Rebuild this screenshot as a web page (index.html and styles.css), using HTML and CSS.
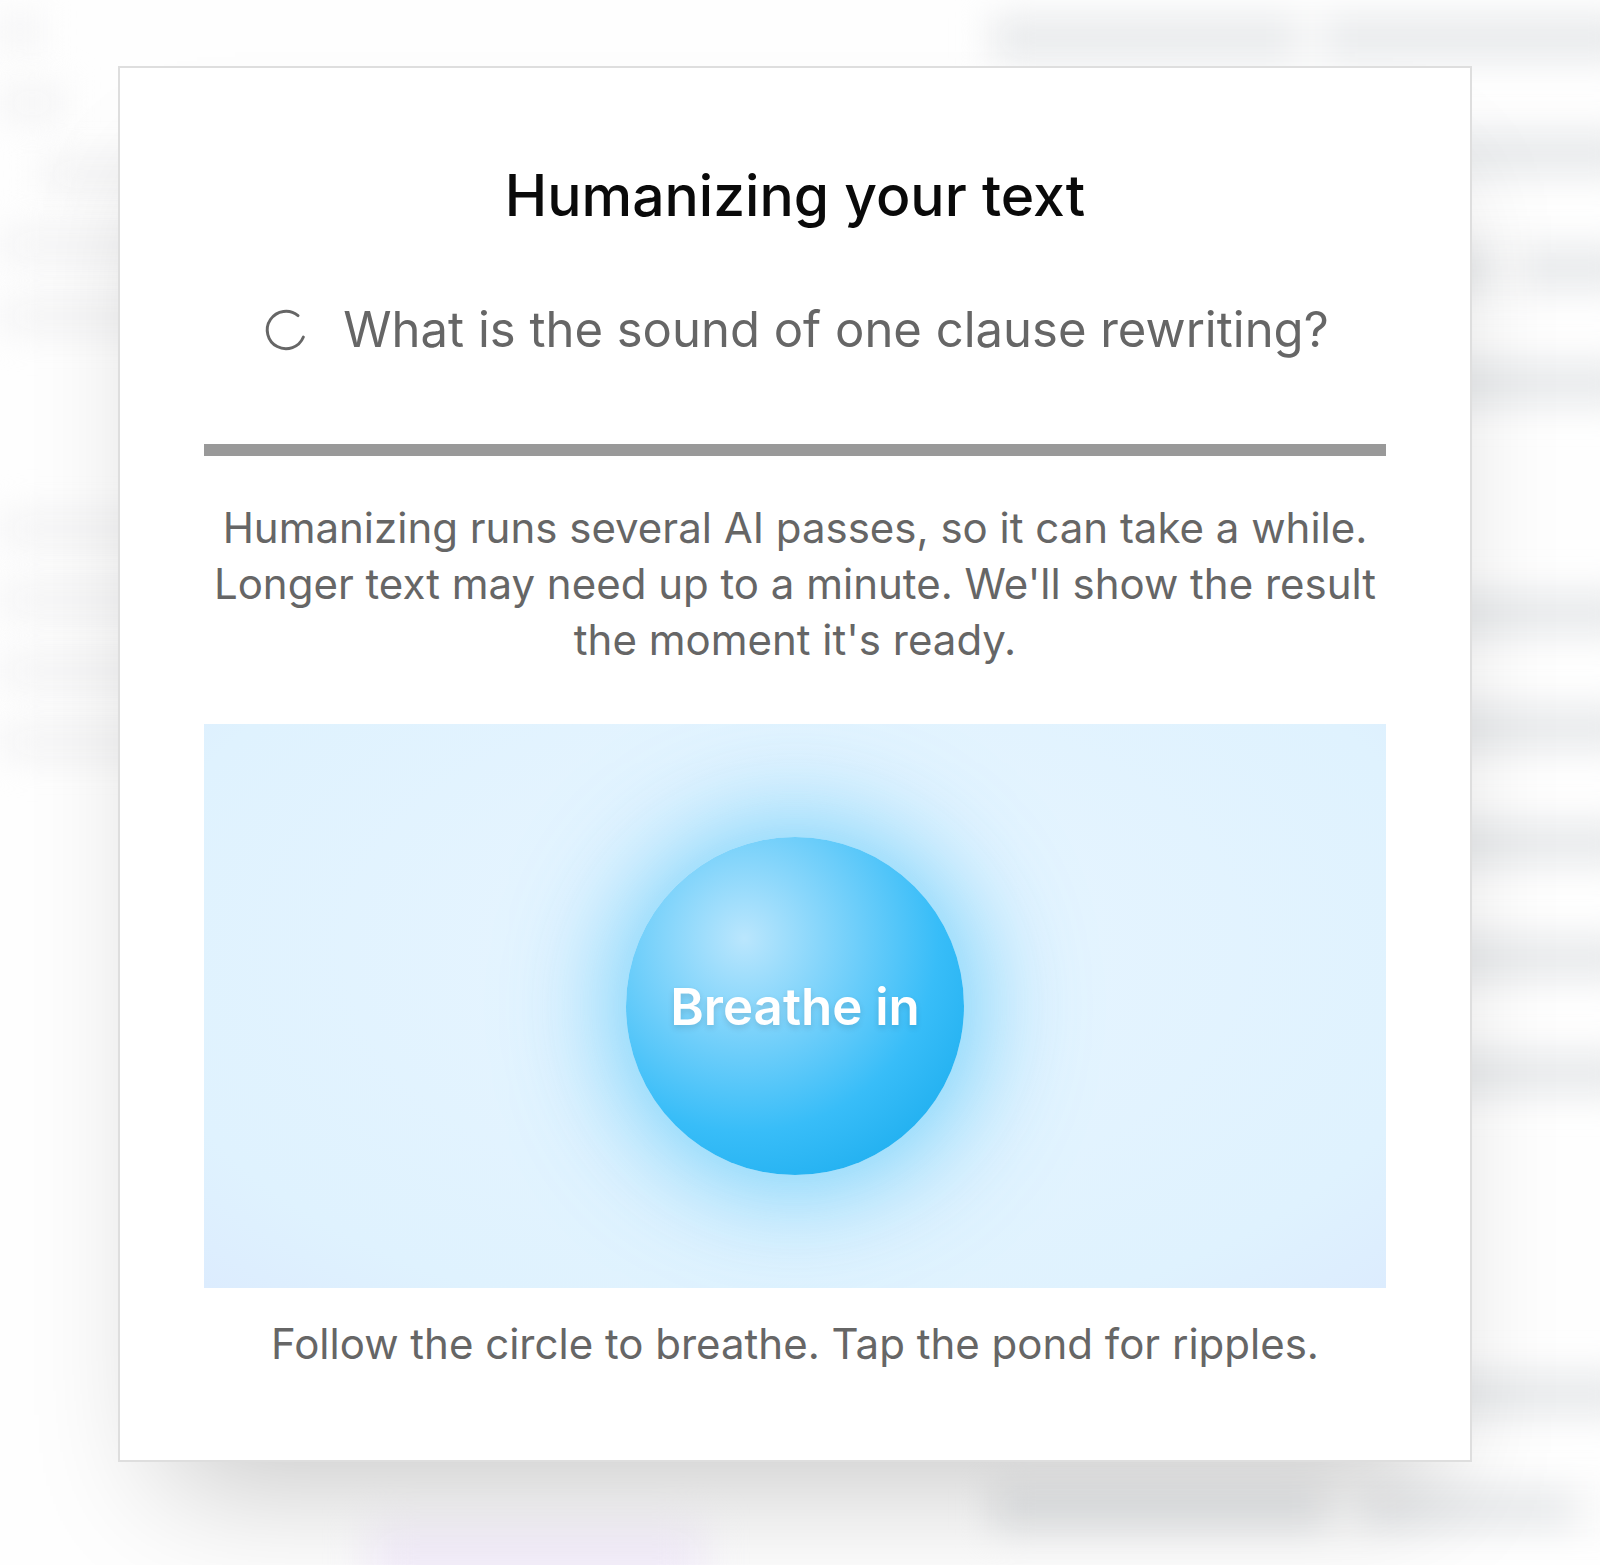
FILE: index.html
```
<!DOCTYPE html>
<html lang="en">
<head>
    <meta charset="UTF-8">
    <meta name="viewport" content="width=device-width, initial-scale=1.0">
    <title>Humanizing your text</title>
    <link rel="stylesheet" href="styles.css">
</head>
<body>
    <!-- Blurred page behind the dialog -->
    <div class="backdrop" aria-hidden="true">
        <div class="backdrop-side">
            <span class="line tiny"></span>
            <span class="line short"></span>
            <span class="line indent"></span>
            <span class="line"></span>
            <span class="line"></span>
            <span class="line empty"></span>
            <span class="line empty"></span>
            <span class="line"></span>
            <span class="line"></span>
            <span class="line"></span>
            <span class="line"></span>
            <span class="accent"></span>
        </div>
        <div class="backdrop-main">
            <span class="line split"></span>
            <span class="line"></span>
            <span class="line split-end"></span>
            <span class="line"></span>
            <span class="line empty"></span>
            <span class="line"></span>
            <span class="line"></span>
            <span class="line"></span>
            <span class="line"></span>
            <span class="line"></span>
            <span class="line empty"></span>
            <span class="line empty half"></span>
            <span class="line"></span>
            <span class="line words"></span>
        </div>
    </div>

    <main class="overlay">
        <section class="dialog" role="dialog" aria-labelledby="dialogTitle">
            <h1 id="dialogTitle">Humanizing your text</h1>
            <div class="status">
                <svg class="spinner" viewBox="0 0 24 24" fill="none" stroke="currentColor" stroke-linecap="round" aria-hidden="true">
                    <path d="M21 12a9 9 0 1 1-6.219-8.56" transform="rotate(22 12 12)"/>
                </svg>
                <p id="statusText">What is the sound of one clause rewriting?</p>
            </div>
            <progress class="progress" value="100" max="100" aria-labelledby="statusText"></progress>
            <p class="note">Humanizing runs several AI passes, so it can take a while. Longer text may need up to a minute. We'll show the result the moment it's ready.</p>
            <button class="pond" type="button">
                <span class="orb">Breathe in</span>
            </button>
            <p class="hint">Follow the circle to breathe. Tap the pond for ripples.</p>
        </section>
    </main>
</body>
</html>
```
FILE: styles.css
```
* {
    box-sizing: border-box;
}

body {
    font-family: Inter, "Liberation Sans", sans-serif;
    background-color: #fefefe;
    color: #666;
    margin: 0;
    min-height: 100vh;
    position: relative;
    overflow-x: hidden;
}

h1, p {
    margin: 0;
}

/* Backdrop */
.backdrop {
    position: absolute;
    top: 0;
    left: 0;
    width: 100%;
    height: 100%;
    overflow: hidden;
    display: flex;
    justify-content: space-between;
}

.backdrop-side {
    width: 50%;
    padding-top: 16px;
}

.backdrop-main {
    width: 40%;
    margin-right: -2%;
    padding-top: 18px;
}

.line {
    display: block;
    width: 100%;
    filter: blur(18px);
}

.backdrop-side .line {
    height: 32px;
    margin-bottom: 39px;
    background-color: #f3f3f4;
}

.backdrop-main .line {
    height: 40px;
    margin-bottom: 75px;
    background-color: #e6e8ea;
}

.backdrop-side .tiny {
    width: 5%;
}

.backdrop-side .short {
    width: 8%;
}

.backdrop-side .indent {
    margin-left: 5%;
}

.backdrop-main .split {
    background: linear-gradient(90deg, #e6e8ea 48%, #fafafa 48%, #fafafa 52%, #e6e8ea 52%);
}

.backdrop-main .split-end {
    background: linear-gradient(90deg, #e6e8ea 78%, #fafafa 78%, #fafafa 83%, #e6e8ea 83%);
}

.backdrop-main .words {
    background: linear-gradient(90deg, #e6e8ea 52%, #fafafa 52%, #fafafa 58%, #e6e8ea 58%, #e6e8ea 91%, #fafafa 91%);
}

.backdrop .empty {
    visibility: hidden;
}

.backdrop-main .half {
    height: 16px;
}

.accent {
    display: block;
    width: 42%;
    height: 60px;
    margin: 770px 0 0 46%;
    background-color: #f5effd;
    filter: blur(22px);
}

/* Dialog */
.overlay {
    position: relative;
    padding: 66px 128px 103px 118px;
}

.dialog {
    background-color: white;
    border: 2px solid #dedede;
    box-shadow: 0 70px 120px -46px rgba(0, 0, 0, 0.22);
    padding: 84px 84px 88px;
    text-align: center;
}

.dialog h1 {
    color: #0a0a0a;
    font-size: 57px;
    line-height: 88px;
    font-weight: 500;
}

.status {
    display: flex;
    justify-content: center;
    align-items: center;
    gap: 32px;
    margin-top: 62px;
    font-size: 49px;
    line-height: 56px;
}

.spinner {
    width: 50px;
    height: 50px;
    flex-shrink: 0;
    stroke-width: 1.4;
}

.progress {
    appearance: none;
    display: block;
    width: 100%;
    height: 12px;
    margin-top: 86px;
    border: none;
    background-color: #e5e5e5;
}

.progress::-webkit-progress-bar {
    background-color: #e5e5e5;
}

.progress::-webkit-progress-value {
    background-color: #999;
}

.note, .hint {
    font-size: 42px;
    line-height: 56px;
}

.note {
    margin-top: 44px;
}

.hint {
    margin-top: 28px;
}

/* Breathing pond */
.pond {
    display: flex;
    justify-content: center;
    align-items: center;
    width: 100%;
    height: 564px;
    margin-top: 56px;
    padding: 0;
    border: none;
    overflow: hidden;
    cursor: pointer;
    font-family: inherit;
    background: radial-gradient(ellipse at 50% 40%, #e8f5ff 0%, #dff2fe 80%, #dcecfe 100%);
}

.orb {
    display: flex;
    justify-content: center;
    align-items: center;
    width: 338px;
    height: 338px;
    border-radius: 50%;
    color: white;
    font-size: 51px;
    font-weight: 600;
    text-shadow: 0 3px 6px rgba(0, 0, 0, 0.12);
    background: radial-gradient(circle at 35% 30%, #bae6fd 0%, #38bdf8 60%, #0ea5e9 100%);
    box-shadow: 0 0 112px 12px rgba(56, 189, 248, 0.7);
}
```
